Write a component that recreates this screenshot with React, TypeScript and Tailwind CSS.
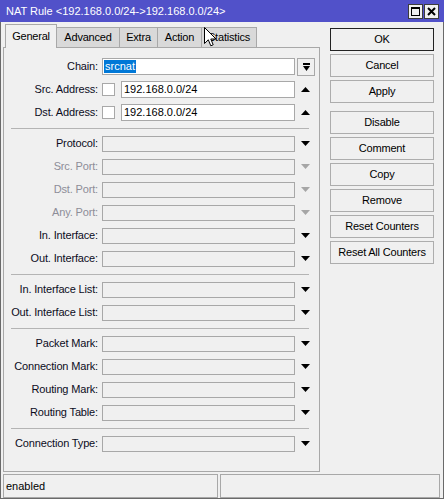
import React from "react";

const Down = ({ disabled = false }: { disabled?: boolean }) => (
  <svg width="9" height="5" viewBox="0 0 9 5">
    <polygon points="0,0 9,0 4.5,5" fill={disabled ? "#a6a6a6" : "#000"} />
  </svg>
);

const Up = () => (
  <svg width="9" height="5" viewBox="0 0 9 5">
    <polygon points="0,5 9,5 4.5,0" fill="#000" />
  </svg>
);

const Sep = () => <div className="mt-[4px] mb-[3px] ml-[7px] mr-[6px] h-px bg-[#b4b4b4]" />;

type RowProps = { label: string; disabled?: boolean };

const Row = ({ label, disabled = false }: RowProps) => (
  <div className="flex items-center h-[23px]">
    <div
      className={`w-[94px] text-right tracking-[-0.15px] whitespace-nowrap ${
        disabled ? "text-[#8d8d98]" : "text-[#0c0c1c]"
      }`}
    >
      {label}
    </div>
    <div className="ml-[4px] flex-1 h-[16px] border border-[#a8a8a8] bg-[#f0f0f0]" />
    <div className="w-[20px] flex items-center justify-center pl-[1px]">
      <Down disabled={disabled} />
    </div>
  </div>
);

const AddrRow = ({ label, value }: { label: string; value: string }) => (
  <div className="flex items-center h-[23px]">
    <div className="w-[94px] text-right tracking-[-0.15px] whitespace-nowrap text-[#0c0c1c]">{label}</div>
    <div className="ml-[4px] flex-1 flex items-center">
      <div className="w-[13px] h-[13px] border border-[#a8a8a8] bg-white" />
      <div className="ml-[6px] flex-1 h-[17px] border border-[#a8a8a8] bg-white flex items-center pl-[2px] text-black">
        {value}
      </div>
    </div>
    <div className="w-[20px] flex items-center justify-center pl-[1px]">
      <Up />
    </div>
  </div>
);

const Btn = ({ label, primary = false, extra = false }: { label: string; primary?: boolean; extra?: boolean }) => (
  <div
    className={`h-[23px] w-[104px] flex items-center justify-center tracking-[-0.2px] text-black bg-[#f0f0f0] border ${
      primary ? "border-[#222]" : "border-[#adadad]"
    } ${extra ? "mt-[8px]" : "mt-[3px]"}`}
  >
    {label}
  </div>
);

export default function App() {
  return (
    <div className="w-[444px] h-[499px] bg-[#f0f0f0] flex flex-col relative font-['Liberation_Sans',Arial,sans-serif] text-[11px] leading-none select-none">
      {/* Title bar */}
      <div className="h-[22px] bg-[#5151c9] flex items-center pl-[6px] pr-[5px] text-white">
        <div className="flex-1 whitespace-nowrap">NAT Rule &lt;192.168.0.0/24-&gt;192.168.0.0/24&gt;</div>
        <div className="flex gap-[1px]">
          <div className="w-[15px] h-[15px] bg-[#f0f0f0] border border-[#3c3c3c] flex items-center justify-center">
            <svg width="9" height="9" viewBox="0 0 9 9">
              <rect x="0.5" y="0.5" width="8" height="8" fill="none" stroke="#000" />
              <rect x="0" y="0" width="9" height="2" fill="#000" />
            </svg>
          </div>
          <div className="w-[15px] h-[15px] bg-[#f0f0f0] border border-[#3c3c3c] flex items-center justify-center">
            <svg width="9" height="9" viewBox="0 0 9 9">
              <path d="M1 1 L8 8 M8 1 L1 8" stroke="#000" strokeWidth="2" />
            </svg>
          </div>
        </div>
      </div>

      {/* Body */}
      <div className="flex-1 flex flex-col border-x border-b border-[#6a6a6a]">
        <div className="flex">
          {/* Left column */}
          <div className="pl-[2px] flex flex-col">
            <div className="mt-[2px] h-[23px] flex items-end pl-[2px]">
              <div className="relative z-10 -mb-px h-[24px] w-[52px] border-x border-t border-[#a8a8a8] bg-[#f0f0f0] flex items-center justify-center text-black tracking-[-0.2px]">
                General
              </div>
              <div className="h-[20px] w-[63px] border-t border-r border-[#a8a8a8] bg-[#d9d9d9] flex items-center justify-center text-black tracking-[-0.2px]">
                Advanced
              </div>
              <div className="h-[20px] w-[38px] border-t border-r border-[#a8a8a8] bg-[#d9d9d9] flex items-center justify-center text-black tracking-[-0.2px]">
                Extra
              </div>
              <div className="h-[20px] w-[44px] border-t border-r border-[#a8a8a8] bg-[#d9d9d9] flex items-center justify-center text-black tracking-[-0.2px]">
                Action
              </div>
              <div className="h-[20px] w-[55px] border-t border-r border-[#a8a8a8] bg-[#d9d9d9] flex items-center justify-center text-black tracking-[-0.2px]">
                Statistics
              </div>
            </div>
            <div className="w-[317px] h-[425px] border border-[#a8a8a8] pt-[7px] pr-[4px]">
              {/* Chain */}
              <div className="flex items-center h-[23px]">
                <div className="w-[94px] text-right tracking-[-0.15px] text-[#0c0c1c]">Chain:</div>
                <div className="ml-[4px] flex-1 h-[17px] border border-[#a8a8a8] bg-white flex items-center pl-px">
                  <span className="bg-[#0078d7] text-white h-[13px] flex items-center px-px">srcnat</span>
                </div>
                <div className="w-[20px] flex items-center justify-end">
                  <div className="w-[18px] h-[18px] border border-[#a8a8a8] flex flex-col items-center justify-center gap-[1px]">
                    <div className="w-[7px] h-[2px] bg-black" />
                    <svg width="7" height="5" viewBox="0 0 7 5">
                      <polygon points="0,0 7,0 3.5,5" fill="#000" />
                    </svg>
                  </div>
                </div>
              </div>
              <AddrRow label="Src. Address:" value="192.168.0.0/24" />
              <AddrRow label="Dst. Address:" value="192.168.0.0/24" />
              <Sep />
              <Row label="Protocol:" />
              <Row label="Src. Port:" disabled />
              <Row label="Dst. Port:" disabled />
              <Row label="Any. Port:" disabled />
              <Row label="In. Interface:" />
              <Row label="Out. Interface:" />
              <Sep />
              <Row label="In. Interface List:" />
              <Row label="Out. Interface List:" />
              <Sep />
              <Row label="Packet Mark:" />
              <Row label="Connection Mark:" />
              <Row label="Routing Mark:" />
              <Row label="Routing Table:" />
              <Sep />
              <Row label="Connection Type:" />
            </div>
          </div>

          {/* Right column */}
          <div className="ml-[10px] mt-[3px] flex flex-col">
            <Btn label="OK" primary />
            <Btn label="Cancel" />
            <Btn label="Apply" />
            <Btn label="Disable" extra />
            <Btn label="Comment" />
            <Btn label="Copy" />
            <Btn label="Remove" />
            <Btn label="Reset Counters" />
            <Btn label="Reset All Counters" />
          </div>
        </div>

        {/* Status bar */}
        <div className="mt-[2px] h-[24px] flex pl-[2px] gap-[2px]">
          <div className="w-[215px] border border-[#a8a8a8] flex items-center pl-[2px] text-black">enabled</div>
          <div className="w-[220px] border border-[#a8a8a8]" />
        </div>
      </div>

      {/* Mouse cursor overlay */}
      <svg className="absolute left-[204px] top-[27px]" width="13" height="20" viewBox="0 0 13 20">
        <path d="M0.5 0.5 V16.5 L4.3 12.8 L6.8 18.8 L9.2 17.8 L6.8 12 H12 Z" fill="#fff" stroke="#000" strokeWidth="1" strokeLinejoin="miter" />
      </svg>
    </div>
  );
}
